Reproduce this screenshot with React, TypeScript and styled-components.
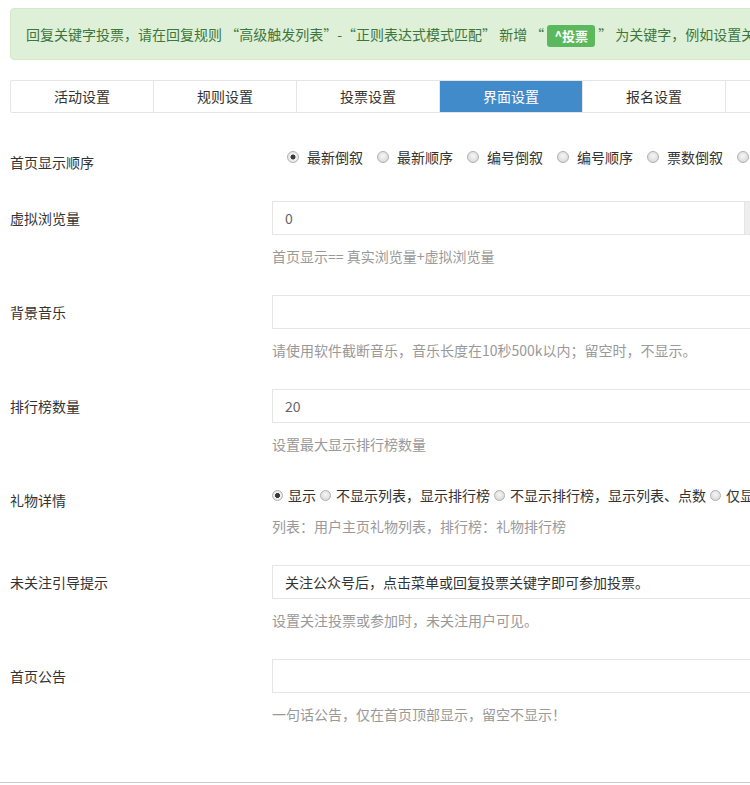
import styled, { createGlobalStyle } from 'styled-components'

const GlobalStyle = createGlobalStyle`
  html, body {
    margin: 0;
    padding: 0;
    overflow: hidden;
    background: #fff;
  }
  body {
    font-family: "Noto Sans CJK SC", "Noto Sans", sans-serif;
    font-size: 14px;
    line-height: 20px;
    color: #333;
  }
`

const tabs = ['活动设置', '规则设置', '投票设置', '界面设置', '报名设置', '分享设置', '其他设置']
const orderOptions = ['最新倒叙', '最新顺序', '编号倒叙', '编号顺序', '票数倒叙', '票数顺序']
const giftOptions = ['显示', '不显示列表，显示排行榜', '不显示排行榜，显示列表、点数', '仅显示点数']

export default function App() {
  return (
    <Page>
      <GlobalStyle />
      <Content>
        <Alert>
          回复关键字投票，请在回复规则 “高级触发列表”-“正则表达式模式匹配” 新增 “ <Badge>^投票</Badge> ” 为关键字，例如设置关键字为 “^投票”，回复 “投票1” 即可为1号选手投票
        </Alert>

        <TabBar>
          {tabs.map((t) => (
            <Tab key={t} $active={t === '界面设置'}>
              {t}
            </Tab>
          ))}
        </TabBar>

        <FormGroup>
          <Label>首页显示顺序</Label>
          <Control>
            <RadioRow $spaced>
              {orderOptions.map((o, i) => (
                <RadioItem key={o} $spaced>
                  <RadioMark $checked={i === 0} $spaced />
                  {o}
                </RadioItem>
              ))}
            </RadioRow>
          </Control>
        </FormGroup>

        <FormGroup>
          <Label>虚拟浏览量</Label>
          <Control>
            <InputGroup>
              <Input defaultValue="0" />
              <Addon>次</Addon>
            </InputGroup>
            <Help>首页显示== 真实浏览量+虚拟浏览量</Help>
          </Control>
        </FormGroup>

        <FormGroup>
          <Label>背景音乐</Label>
          <Control>
            <Input defaultValue="" />
            <Help>请使用软件截断音乐，音乐长度在10秒500k以内；留空时，不显示。</Help>
          </Control>
        </FormGroup>

        <FormGroup>
          <Label>排行榜数量</Label>
          <Control>
            <Input defaultValue="20" />
            <Help>设置最大显示排行榜数量</Help>
          </Control>
        </FormGroup>

        <FormGroup>
          <Label>礼物详情</Label>
          <Control>
            <RadioRow>
              {giftOptions.map((o, i) => (
                <RadioItem key={o}>
                  <RadioMark $checked={i === 0} />
                  {o}
                </RadioItem>
              ))}
            </RadioRow>
            <Help>列表：用户主页礼物列表，排行榜：礼物排行榜</Help>
          </Control>
        </FormGroup>

        <FormGroup>
          <Label>未关注引导提示</Label>
          <Control>
            <Input $dark defaultValue="关注公众号后，点击菜单或回复投票关键字即可参加投票。" />
            <Help>设置关注投票或参加时，未关注用户可见。</Help>
          </Control>
        </FormGroup>

        <FormGroup>
          <Label>首页公告</Label>
          <Control>
            <Input defaultValue="" />
            <Help>一句话公告，仅在首页顶部显示，留空不显示！</Help>
          </Control>
        </FormGroup>
      </Content>
      <Footer />
    </Page>
  )
}

const Page = styled.div`
  width: 1100px;
`

const Content = styled.div`
  padding: 8px 0 0 10px;
`

const Alert = styled.div`
  background: #dff0d8;
  border: 1px solid #d6e9c6;
  border-radius: 4px;
  color: #3c763d;
  padding: 15px;
  line-height: 20px;
  white-space: nowrap;
  overflow: hidden;
`

const Badge = styled.span`
  display: inline-block;
  background: #5cb85c;
  color: #fff;
  font-weight: bold;
  font-size: 13px;
  line-height: 16px;
  padding: 3px 7px;
  margin: 1px 0 -3px;
  border-radius: 3px;
  vertical-align: top;
`

const TabBar = styled.div`
  display: flex;
  margin: 20px 0 32px;
  border: 1px solid #e5e5e5;
  border-radius: 2px;
  overflow: hidden;
`

const Tab = styled.div<{ $active?: boolean }>`
  flex: 0 0 143px;
  box-sizing: border-box;
  height: 31px;
  line-height: 31px;
  text-align: center;
  border-right: 1px solid #e5e5e5;
  background: ${(p) => (p.$active ? '#428bca' : '#fff')};
  color: ${(p) => (p.$active ? '#fff' : '#333')};
`

const FormGroup = styled.div`
  display: flex;
  margin-bottom: 29px;
`

const Label = styled.div`
  flex: 0 0 262px;
  padding-top: 7px;
  line-height: 20px;
  color: #333;
`

const Control = styled.div`
  width: 520px;
`

const InputGroup = styled.div`
  display: flex;
`

const Input = styled.input<{ $dark?: boolean }>`
  display: block;
  width: 100%;
  height: 34px;
  box-sizing: border-box;
  border: 1px solid #e5e5e5;
  padding: 6px 12px;
  font: inherit;
  color: ${(p) => (p.$dark ? '#333' : '#666')};
  background: #fff;
  outline: none;
  border-radius: 0;
`

const Addon = styled.span`
  flex: 0 0 47px;
  box-sizing: border-box;
  height: 34px;
  line-height: 32px;
  text-align: center;
  background: #eee;
  border: 1px solid #e5e5e5;
  border-left: 0;
  color: #555;
`

const Help = styled.div`
  margin-top: 11px;
  color: #999;
  white-space: nowrap;
`

const RadioRow = styled.div<{ $spaced?: boolean }>`
  display: flex;
  align-items: center;
  padding-top: 2px;
  padding-left: ${(p) => (p.$spaced ? '15px' : '0')};
  white-space: nowrap;
  line-height: 20px;
`

const RadioItem = styled.label<{ $spaced?: boolean }>`
  display: inline-flex;
  align-items: center;
  margin-right: ${(p) => (p.$spaced ? '14px' : '4px')};
  color: #333;
`

const RadioMark = styled.span<{ $checked?: boolean; $spaced?: boolean }>`
  display: inline-block;
  box-sizing: border-box;
  width: ${(p) => (p.$spaced ? '12px' : '11px')};
  height: ${(p) => (p.$spaced ? '12px' : '11px')};
  margin-right: ${(p) => (p.$spaced ? '8px' : '5px')};
  border-radius: 50%;
  border: 1px solid #b0b0b0;
  background: ${(p) =>
    p.$checked
      ? 'radial-gradient(circle, #3a3a3a 0 2.2px, #f2f2f2 2.8px, #dcdcdc 100%)'
      : 'radial-gradient(circle at 50% 40%, #f6f6f6, #d2d2d2)'};
`

const Footer = styled.div`
  margin-top: 58px;
  border-top: 1px solid #ccc;
  height: 40px;
`
